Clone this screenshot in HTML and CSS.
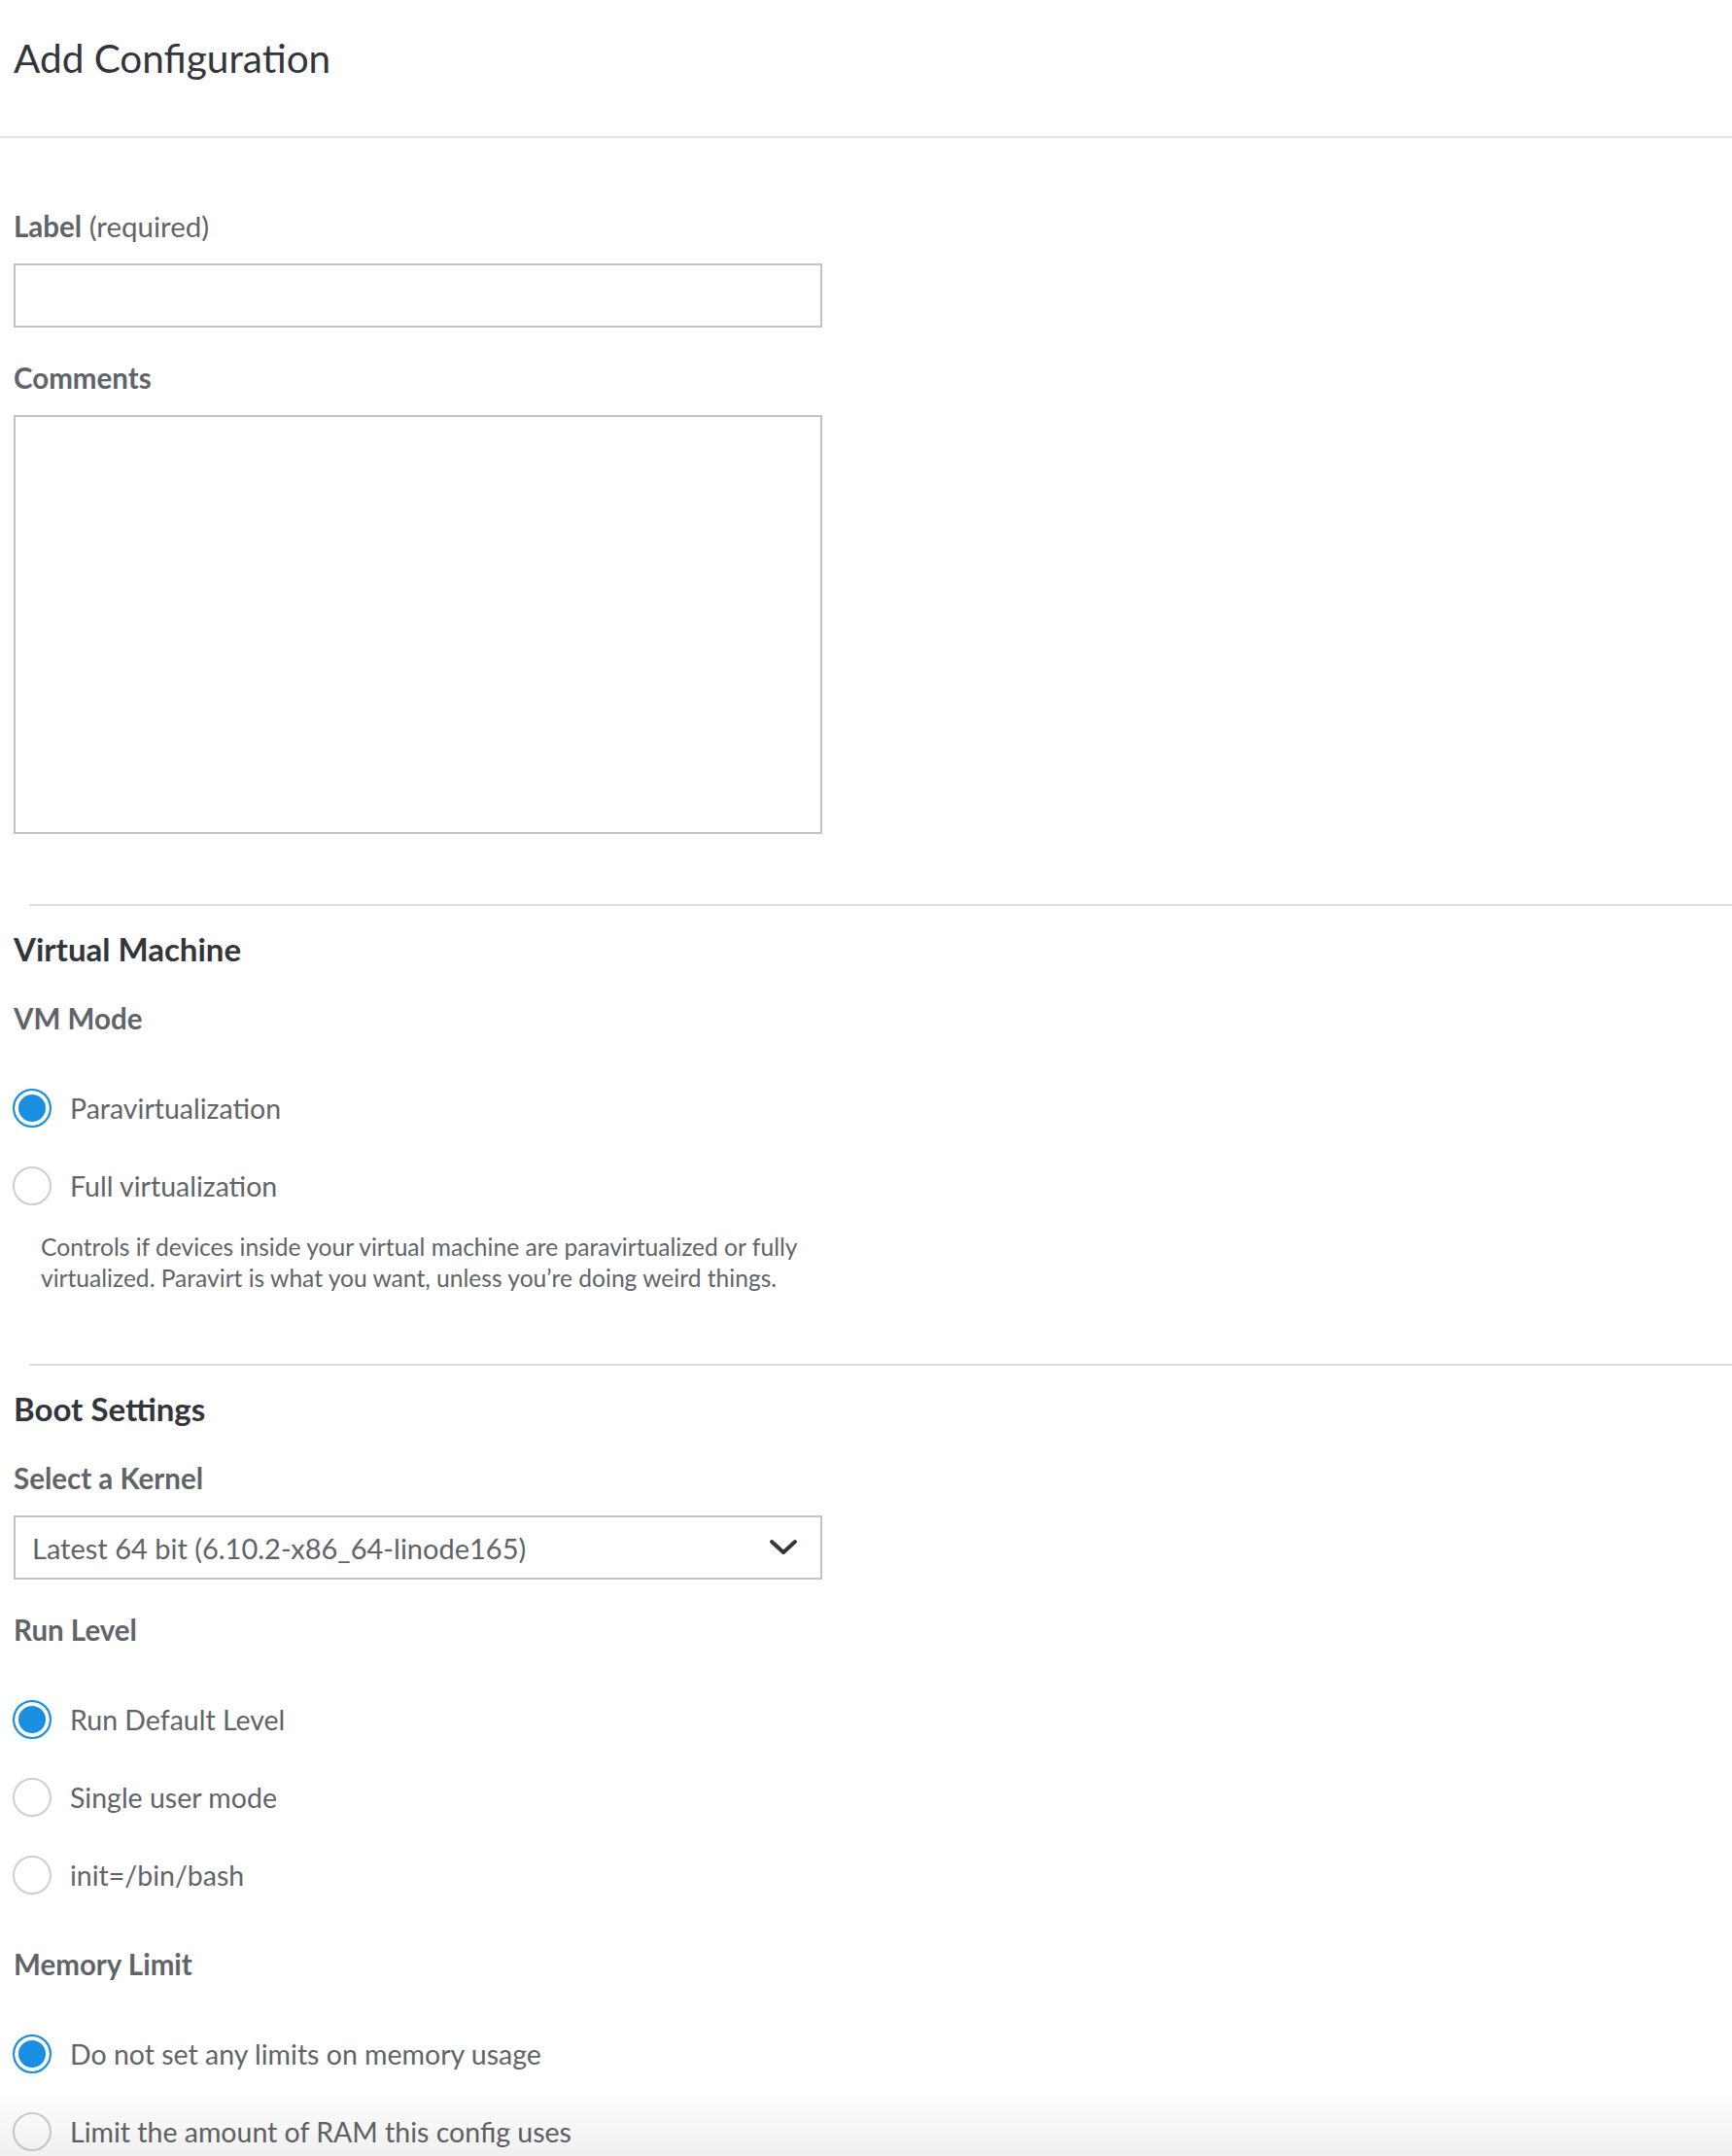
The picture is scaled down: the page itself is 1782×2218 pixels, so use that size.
FILE: index.html
```html
<!DOCTYPE html>
<html lang="en">

<head>
    <meta charset="UTF-8">
    <meta name="viewport" content="width=device-width, initial-scale=1.0">
    <title>Add Configuration</title>
    <link rel="stylesheet" href="styles.css">
</head>

<body>
    <!-- dialog title -->
    <header class="dialog-title">
        <h2>Add Configuration</h2>
    </header>

    <form class="config-form">
        <!-- label + comments -->
        <div class="field first">
            <label class="field-label" for="label"><b>Label</b> (required)</label>
            <input class="text-input" id="label" type="text">
        </div>
        <div class="field">
            <label class="field-label" for="comments"><b>Comments</b></label>
            <textarea class="text-area" id="comments"></textarea>
        </div>

        <!-- virtual machine -->
        <section class="group">
            <h3>Virtual Machine</h3>
            <div class="field">
                <span class="field-label"><b>VM Mode</b></span>
                <ul class="radios">
                    <li class="on"><span class="dot"></span>Paravirtualization</li>
                    <li><span class="dot"></span>Full virtualization</li>
                </ul>
                <p class="helper">Controls if devices inside your virtual machine are paravirtualized or fully virtualized. Paravirt is what you want, unless you’re doing weird things.</p>
            </div>
        </section>

        <!-- boot settings -->
        <section class="group">
            <h3>Boot Settings</h3>
            <div class="field">
                <span class="field-label"><b>Select a Kernel</b></span>
                <div class="select">
                    <span>Latest 64 bit (6.10.2-x86_64-linode165)</span>
                    <svg width="30" height="18" viewBox="0 0 30 18"><polyline points="3,3 15,14 27,3" fill="none" stroke="#32363c" stroke-width="4" stroke-linecap="round" stroke-linejoin="round" /></svg>
                </div>
            </div>
            <div class="field">
                <span class="field-label"><b>Run Level</b></span>
                <ul class="radios">
                    <li class="on"><span class="dot"></span>Run Default Level</li>
                    <li><span class="dot"></span>Single user mode</li>
                    <li><span class="dot"></span>init=/bin/bash</li>
                </ul>
            </div>
            <div class="field">
                <span class="field-label"><b>Memory Limit</b></span>
                <ul class="radios">
                    <li class="on"><span class="dot"></span>Do not set any limits on memory usage</li>
                    <li><span class="dot"></span>Limit the amount of RAM this config uses</li>
                </ul>
            </div>
        </section>
    </form>

    <!-- scroll shadow at the bottom -->
    <div class="fade"></div>
</body>

</html>
```

FILE: styles.css
```css
* {
    margin: 0;
    padding: 0;
    list-style: none;
    box-sizing: border-box;
}

body {
    font-family: "Lato", "Liberation Sans", sans-serif;
    color: #606469;
    background-color: #fff;
    overflow: hidden;
}

.dialog-title {
    padding: 36px 14px 57px;
    border-bottom: 2px solid #e3e5e8;
}

.dialog-title h2 {
    font-size: 40.5px;
    line-height: 47px;
    font-weight: 400;
    color: #32363c;
}

.config-form {
    padding: 0 0 0 14px;
}

.field {
    margin-top: 37px;
}

.field.first {
    margin-top: 76px;
}

.field-label {
    display: block;
    font-size: 29.5px;
    line-height: 30px;
    color: #606469;
}

.field-label b {
    font-weight: 700;
}

.text-input,
.text-area,
.select {
    display: block;
    width: 832px;
    margin-top: 23px;
    border: 2px solid #c2c3c9;
    background-color: #fff;
    font-family: inherit;
}

.text-input {
    height: 66px;
}

.text-area {
    height: 431px;
    resize: none;
}

.group {
    margin-top: 72px;
    margin-left: 16px;
    border-top: 2px solid #dcdde0;
}

.group > * {
    margin-left: -16px;
}

.group h3 {
    margin-top: 26px;
    font-size: 33px;
    line-height: 36px;
    font-weight: 700;
    color: #32363c;
}

.group h3 + .field {
    margin-top: 39px;
}

.radios {
    margin-top: 37px;
}

.radios li {
    display: flex;
    align-items: center;
    height: 80px;
    font-size: 28.5px;
    color: #606469;
}

.radios .dot {
    flex: none;
    width: 40px;
    height: 40px;
    margin: 0 19px 0 -1px;
    border: 2px solid #cdced3;
    border-radius: 50%;
    background-color: #fff;
}

.radios .on .dot {
    border-color: #1a8ee0;
    background-color: #1a8ee0;
    box-shadow: inset 0 0 0 4px #fff;
}

.helper {
    width: 810px;
    margin: 7px 0 0 28px;
    font-size: 24.6px;
    line-height: 32px;
    color: #606469;
}

.select {
    display: flex;
    align-items: center;
    justify-content: space-between;
    height: 66px;
    padding: 0 23px 0 17px;
    font-size: 29px;
    color: #606469;
}

.fade {
    position: fixed;
    left: 0;
    right: 0;
    bottom: 0;
    height: 70px;
    background: linear-gradient(rgba(0, 0, 0, 0), rgba(0, 0, 0, 0.06));
    pointer-events: none;
}
```
